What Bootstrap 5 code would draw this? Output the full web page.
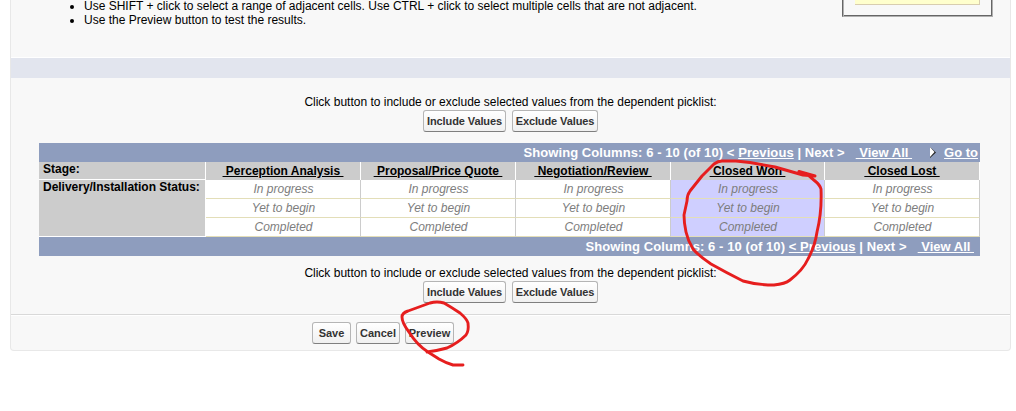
<!DOCTYPE html>
<html lang="en">
<head>
<meta charset="utf-8">
<title>Edit Field Dependency</title>
<link href="https://cdn.jsdelivr.net/npm/bootstrap@5.3.0/dist/css/bootstrap.min.css" rel="stylesheet">
<script src="https://cdn.jsdelivr.net/npm/bootstrap@5.3.0/dist/js/bootstrap.bundle.min.js"></script>
<style>
body{font:12px/14px "Liberation Sans",Arial,sans-serif;color:#000;background:#fff;height:411px}
.panel{width:1001px;height:351px;margin-left:10px;background:#f8f8f8;border:1px solid #e8e8e8;border-top:0;border-radius:0 0 4px 4px}
.intro{height:57px}
.tips{margin:-1px 0 0;padding-left:73px}
.legend-box{width:151px;height:17px;margin-right:17px;border:solid;border-color:#b0b0b0 #b0b0b0 #b0b0b0 #666;border-width:0 1px 1px 1px;box-shadow:inset 1px 0 #b0b0b0,inset -1px -1px #666;padding-left:12px}
.legend-fill{width:125px;height:5px;background:#ffffcd;border:solid #d8cdb0;border-width:0 1px 1px 0}
.band{height:21px;background:#e2e5ee;border-top:1px solid #fff}
.prompt{height:65px;padding-top:17px}
.prompt p{margin-bottom:1px}
.prompt.second{height:58px;padding-top:10px}
.btn-pair{gap:6px}
.sf-btn{--bs-btn-padding-x:0;--bs-btn-padding-y:0;height:22px;font:bold 11px/20px "Liberation Sans",Arial,sans-serif;color:#333;border:1px solid #b5b5b5;border-bottom-color:#7f7f7f;border-radius:3px;background:linear-gradient(#fff,#f0f0f0)}
.w-inc{width:83px;letter-spacing:-.1px}.w-exc{width:86px;letter-spacing:-.1px}.w-save{width:39px}.w-cancel{width:44px}.w-prev{width:49px}
.matrix{width:941px;margin-left:28px}
.pager{height:19px;background:#8e9dbe;color:#fff;font-weight:bold;font-size:13px;line-height:19px;white-space:pre}
.pager span{letter-spacing:.08px}
.pager a,.stage a{color:inherit;text-decoration:underline;white-space:pre}
.pager .all{margin-left:11px}
.pager .goto{margin-right:2px}
.pager.bottom{padding-right:6px}
.arrow{margin:0 7px 0 18px}
.grid{display:grid;grid-template-columns:167px repeat(3,155px) 154px 155px;grid-template-rows:18px 19px 19px 19px;background:#fff}
.lbl{background:#ccc;font-weight:bold;border:solid #fff;border-width:0 1px 1px 0;padding-left:4px;white-space:nowrap}
.lbl.status{grid-row:2 / span 3;letter-spacing:-.02px}
.stage{background:#ccc;border-right:1px solid #fff;font-weight:bold;line-height:18px;text-align:center}
.opt{border-right:1px solid #ccc;border-bottom:1px solid #e3deb8;font-style:italic;color:#7d7d7d;text-align:center;line-height:18px;padding-left:1px}
.opt.sel{background:#cfcfff}
.actions{height:35px;border-top:1px solid #d9d9d9;box-shadow:inset 0 1px #fff;padding:7px 0 0 301px;gap:5px}
.marks{left:0;top:0;pointer-events:none}
</style>
</head>
<body class="position-relative overflow-hidden">
<main class="panel">
  <section class="intro d-flex justify-content-between align-items-start">
    <ul class="tips">
      <li>Use SHIFT + click to select a range of adjacent cells. Use CTRL + click to select multiple cells that are not adjacent.</li>
      <li>Use the Preview button to test the results.</li>
    </ul>
    <div class="legend-box"><div class="legend-fill"></div></div>
  </section>
  <div class="band"></div>
  <section class="prompt text-center">
    <p>Click button to include or exclude selected values from the dependent picklist:</p>
    <div class="btn-pair d-flex justify-content-center"><button class="btn sf-btn w-inc">Include Values</button><button class="btn sf-btn w-exc">Exclude Values</button></div>
  </section>
  <section class="matrix">
    <div class="pager d-flex justify-content-end align-items-center"><span>Showing Columns: 6 - 10 (of 10) &lt; <a href="#">Previous</a> | Next &gt;</span><a href="#" class="all"> View All </a><svg class="arrow" width="7" height="11" viewBox="0 0 7 11"><path d="M0 0L6 5.5 0 11z" fill="#222"/><path d="M0 0v10L4.5 5z" fill="#fff"/></svg><a href="#" class="goto">Go to</a></div>
    <div class="grid">
      <div class="lbl">Stage:</div>
      <div class="stage"><a href="#"> Perception Analysis </a></div><div class="stage"><a href="#"> Proposal/Price Quote </a></div><div class="stage"><a href="#"> Negotiation/Review </a></div><div class="stage"><a href="#"> Closed Won </a></div><div class="stage"><a href="#"> Closed Lost </a></div>
      <div class="lbl status">Delivery/Installation Status:</div>
      <div class="opt">In progress</div><div class="opt">In progress</div><div class="opt">In progress</div><div class="opt sel">In progress</div><div class="opt">In progress</div>
      <div class="opt">Yet to begin</div><div class="opt">Yet to begin</div><div class="opt">Yet to begin</div><div class="opt sel">Yet to begin</div><div class="opt">Yet to begin</div>
      <div class="opt">Completed</div><div class="opt">Completed</div><div class="opt">Completed</div><div class="opt sel">Completed</div><div class="opt">Completed</div>
    </div>
    <div class="pager bottom d-flex justify-content-end align-items-center"><span>Showing Columns: 6 - 10 (of 10) <a href="#">&lt; Previous</a> | Next &gt;</span><a href="#" class="all"> View All </a></div>
  </section>
  <section class="prompt second text-center">
    <p>Click button to include or exclude selected values from the dependent picklist:</p>
    <div class="btn-pair d-flex justify-content-center"><button class="btn sf-btn w-inc">Include Values</button><button class="btn sf-btn w-exc">Exclude Values</button></div>
  </section>
  <section class="actions d-flex align-items-start"><button class="btn sf-btn w-save">Save</button><button class="btn sf-btn w-cancel">Cancel</button><button class="btn sf-btn w-prev">Preview</button></section>
</main>
<svg class="marks position-absolute" width="1016" height="411" fill="none" stroke="#e61e1e" stroke-width="2.9" stroke-linecap="round" stroke-linejoin="round">
  <path d="M799 171.500L815 176L803 175L775 167L750 162.500L736 161H722Q718 161 714 164L702 176L690 191Q687 195 687 201L684 215Q684 223 686 232Q688 241 693 249Q699 256 711 264Q727 273 743 281Q757 285 774 285Q785 284 790 280Q803 270 808 259Q815 246 817 232Q822 212 821 189Q820 185 815 181L809 176"/>
  <path d="M463 365H453Q446 363 439 359L428 352Q417 345 409 332Q402 323 402 317Q402 313 408 311L430 303Q437 301 444 303Q451 307 460 313Q467 319 468 323Q469 331 466 335Q458 343 447 348Q436 351 427 352"/>
</svg>
</body>
</html>
